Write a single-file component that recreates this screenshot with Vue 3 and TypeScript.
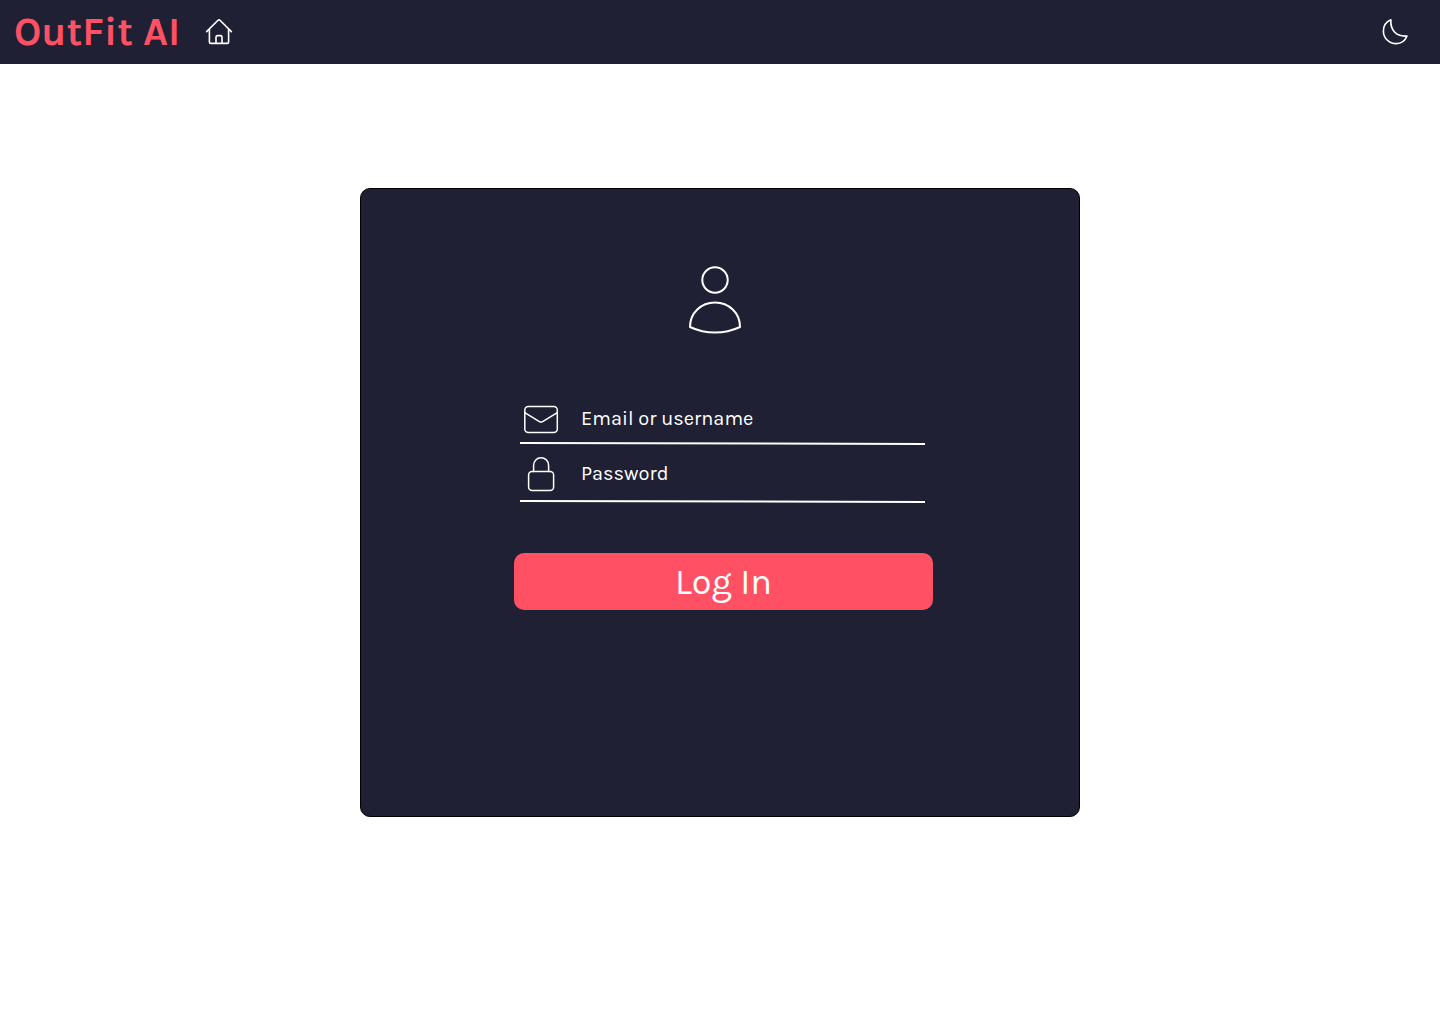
<script setup lang="ts">
import { ref } from 'vue'

const identity = ref('')
const password = ref('')
</script>

<template>
  <div class="page">
    <header class="topbar">
      <h1 class="brand">OutFit AI</h1>
      <nav>
        <a href="#" class="icon-link" aria-label="Home">
          <svg width="28" height="28" viewBox="0 0 28 28">
            <path d="M1.6 13.6 13 2.3Q14 1.4 15 2.3L26.4 13.6M4.4 11V24Q4.4 25.4 5.8 25.4H22.2Q23.6 25.4 23.6 24V11M11 25.4V19.2Q11 17.6 12.6 17.6H15.4Q17 17.6 17 19.2V25.4" />
          </svg>
        </a>
      </nav>
      <button type="button" class="icon-link theme" aria-label="Toggle dark mode">
        <svg width="28" height="28" viewBox="0 0 28 28">
          <path d="M9.9 1.8C9.1 11.9 15 19 26 18C24.2 22.5 20 25.6 15.2 25.6C8.2 25.6 2.4 20 2.4 13.2C2.4 8.2 5.4 3.7 9.9 1.8Z" />
        </svg>
      </button>
    </header>

    <main class="card">
      <form class="login" @submit.prevent>
        <svg class="avatar" width="54" height="70" viewBox="0 0 54 70">
          <circle cx="27" cy="15" r="12.7" />
          <path d="M2 62C2 48 13 37.5 27 37.5S52 48 52 62Q40 67.6 27 67.6T2 62Z" />
        </svg>

        <div class="field">
          <label class="row" for="identity">
            <svg class="glyph" width="36" height="36" viewBox="0 0 36 36" aria-label="Email or username">
              <rect x="1.8" y="5.5" width="32.5" height="26" rx="3.5" />
              <path d="M1.8 11.6 16.4 20.6Q18 21.6 19.6 20.6L34.3 11.6" />
            </svg>
            <input id="identity" v-model="identity" type="text" placeholder="Email or username" />
          </label>
          <svg class="rule" height="3" viewBox="0 0 405 3" preserveAspectRatio="none">
            <path d="M0 1 405 2" />
          </svg>
        </div>

        <div class="field second">
          <label class="row tall" for="password">
            <svg class="glyph" width="36" height="36" viewBox="0 0 36 36" aria-label="Password">
              <rect x="5.6" y="15.6" width="25" height="18.8" rx="3.5" />
              <path d="M10.6 15.6V9.4C10.6 4.9 13.9 1.8 18 1.8S25.6 4.9 25.6 9.4V15.6" />
            </svg>
            <input id="password" v-model="password" type="password" placeholder="Password" />
          </label>
          <svg class="rule" height="3" viewBox="0 0 405 3" preserveAspectRatio="none">
            <path d="M0 1 405 2" />
          </svg>
        </div>

        <button type="submit" class="submit">Log In</button>
      </form>
    </main>
  </div>
</template>

<style>
body {
  margin: 0;
  background: #fff;
}
</style>

<style scoped>
.page {
  font-family: Karla, Inter, sans-serif;
  color: #fff;
}

.topbar {
  display: flex;
  align-items: center;
  box-sizing: border-box;
  height: 64px;
  padding: 0 31px 0 14px;
  background: #202035;
}

.brand {
  margin: 0;
  color: #ff5064;
  font-size: 40px;
  font-weight: 700;
  line-height: 48px;
}

nav {
  margin-left: 25px;
}

svg {
  display: block;
  fill: none;
  stroke: #fff;
  stroke-width: 1.6;
  stroke-linejoin: round;
  stroke-linecap: round;
}

.icon-link {
  display: block;
  padding: 0;
  border: 0;
  background: none;
  cursor: pointer;
}

.theme {
  margin-left: auto;
}

.card {
  display: flex;
  justify-content: center;
  box-sizing: border-box;
  width: 50%;
  margin: 124px auto 0;
  padding: 76px 0 206px 7px;
  border: 1px solid #000;
  border-radius: 10px;
  background: #202035;
}

.login {
  display: flex;
  flex-direction: column;
  width: 419px;
}

.avatar {
  align-self: center;
  margin: 0 17px 60px 0;
  stroke-width: 2;
}

.field {
  padding: 0 8px 0 6px;
}

.second {
  margin-top: 2px;
}

.row {
  display: flex;
  align-items: center;
  gap: 22px;
  height: 47px;
  padding-left: 3px;
}

.tall {
  height: 53px;
}

.glyph {
  flex: none;
  stroke-width: 1.5;
}

input {
  flex: 1;
  min-width: 0;
  padding: 0;
  border: 0;
  outline: 0;
  background: none;
  color: #fff;
  font: inherit;
  font-size: 20px;
  line-height: 24px;
}

input::placeholder {
  color: #fff;
  opacity: 1;
}

.rule {
  width: 100%;
  stroke-width: 2;
  stroke-linecap: butt;
}

.submit {
  height: 57px;
  margin-top: 50px;
  padding: 0;
  border: 0;
  border-radius: 10px;
  background: #ff5064;
  color: #fff;
  font: inherit;
  font-size: 36px;
  cursor: pointer;
}
</style>
